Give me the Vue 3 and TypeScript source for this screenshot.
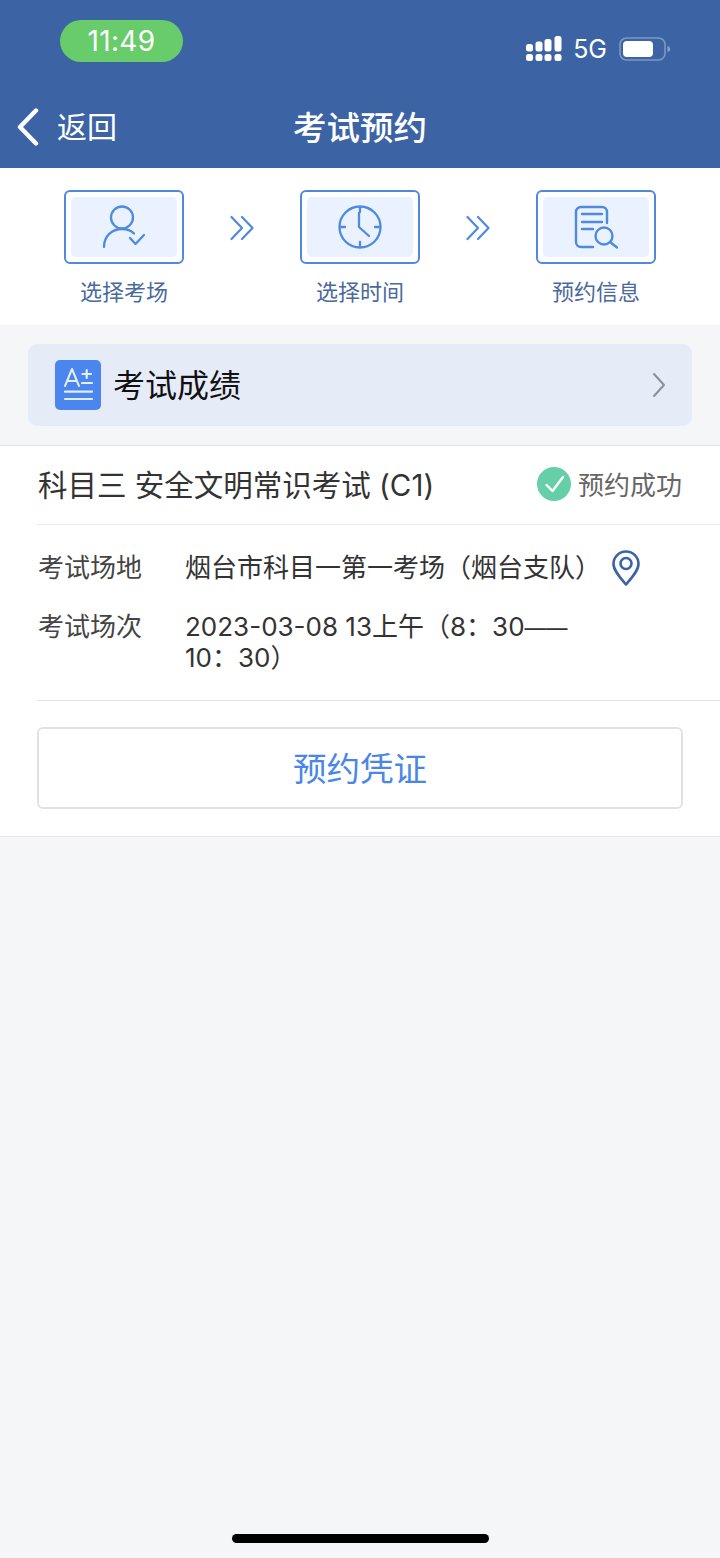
<script setup lang="ts">
interface Step {
  label: string
  icon: 'user' | 'clock' | 'doc'
}

const steps: Step[] = [
  { label: '选择考场', icon: 'user' },
  { label: '选择时间', icon: 'clock' },
  { label: '预约信息', icon: 'doc' }
]
</script>

<template>
  <div class="page">
    <header class="header">
      <div class="status">
        <div class="time">11:49</div>
        <div class="status-right">
          <svg class="signal" width="36" height="26" viewBox="0 0 36 26" fill="#fff">
            <rect x="0" y="8" width="7" height="7.500" rx="2.500" />
            <rect x="0" y="18" width="7" height="7" rx="2.500" />
            <rect x="9.500" y="5.500" width="7" height="10" rx="2.500" />
            <rect x="9.500" y="18" width="7" height="7" rx="2.500" />
            <rect x="18.500" y="3" width="7" height="12.500" rx="2.500" />
            <rect x="18.500" y="18" width="7" height="7" rx="2.500" />
            <rect x="28.500" y="0" width="7" height="15.500" rx="2.500" />
            <rect x="28.500" y="18" width="7" height="7" rx="2.500" />
          </svg>
          <span class="net">5G</span>
          <svg class="battery" width="52" height="26" viewBox="0 0 52 26">
            <rect x="1" y="2" width="45" height="22" rx="6.500" fill="none" stroke="#7d97c4" stroke-width="1.600" />
            <rect x="4" y="5" width="30" height="16" rx="4" fill="#fff" />
            <path d="M48.500 10c2 .6 2.600 2 2.600 3s-.6 2.400-2.600 3z" fill="#8ba3cc" />
          </svg>
        </div>
      </div>
      <div class="nav">
        <div class="back">
          <svg width="24" height="38" viewBox="0 0 24 38" fill="none">
            <path d="M20 2.500 4 19l16 16.500" stroke="#fff" stroke-width="4.400" stroke-linecap="round" stroke-linejoin="round" />
          </svg>
          <span>返回</span>
        </div>
        <div class="title">考试预约</div>
      </div>
    </header>

    <section class="steps">
      <template v-for="(step, i) in steps" :key="step.label">
        <div class="step">
          <div class="step-box">
            <div class="step-inner">
              <svg v-if="step.icon === 'user'" width="44" height="44" viewBox="0 0 44 44" fill="none" stroke="#4f8ae0" stroke-width="2.300" stroke-linecap="round" stroke-linejoin="round">
                <circle cx="20" cy="12.500" r="11" />
                <path d="M2 42C2 31 10 24 20 24c5 0 9 1.500 12 4.500" />
                <path d="m28 33 5.500 6L42 30" />
              </svg>
              <svg v-else-if="step.icon === 'clock'" width="44" height="44" viewBox="0 0 44 44" fill="none" stroke="#4f8ae0" stroke-width="2.300" stroke-linecap="round" stroke-linejoin="round">
                <circle cx="22" cy="22" r="20.500" />
                <path d="M22 2v5M22 37v5M2 22h5M37 22h5" />
                <path d="M21 8v14l10 9" />
              </svg>
              <svg v-else width="44" height="44" viewBox="0 0 44 44" fill="none" stroke="#4f8ae0" stroke-width="2.400" stroke-linecap="round" stroke-linejoin="round">
                <path d="M33 18V7a5 5 0 0 0-5-5H7a5 5 0 0 0-5 5v30a5 5 0 0 0 5 5h12" />
                <path d="M8 9h20M8 17h20M8 24h11" />
                <circle cx="30" cy="31" r="8.500" />
                <path d="m36 37 7 5.500" />
              </svg>
            </div>
          </div>
          <div class="step-label">{{ step.label }}</div>
        </div>
        <svg v-if="i < steps.length - 1" class="arrow" width="24" height="26" viewBox="0 0 24 26" fill="none" stroke="#4f8ae0" stroke-width="2.200" stroke-linecap="round" stroke-linejoin="round">
          <path d="m1.500 2 10.500 11L1.500 24" />
          <path d="m12 2 10.500 11L12 24" />
        </svg>
      </template>
    </section>

    <section class="score-wrap">
      <div class="score">
        <div class="score-icon">
          <svg width="34" height="36" viewBox="0 0 34 36" fill="none" stroke="#e4edfc" stroke-linecap="round">
            <path d="M4 19 11 2l7 17M6.500 14h9" stroke-width="2" stroke-linejoin="round" />
            <path d="M21.500 7h8.500M25.700 3v8M21 16h10" stroke-width="2.200" />
            <path d="M4 24.700h27M4 32h27" stroke-width="2.200" />
          </svg>
        </div>
        <div class="score-text">考试成绩</div>
        <svg class="chevron" width="14" height="26" viewBox="0 0 14 26" fill="none">
          <path d="m2 2 10 11L2 24" stroke="#8a8f97" stroke-width="2" stroke-linecap="round" stroke-linejoin="round" />
        </svg>
      </div>
    </section>

    <section class="card">
      <div class="card-head">
        <div class="subject">科目三 安全文明常识考试 (C1)</div>
        <div class="state">
          <svg class="state-icon" width="34" height="34" viewBox="0 0 34 34">
            <circle cx="17" cy="17" r="17" fill="#67cfa8" />
            <path d="M9.500 18l6 6L26 10" fill="none" stroke="#fff" stroke-width="2.400" stroke-linecap="round" stroke-linejoin="round" />
          </svg>
          <span>预约成功</span>
        </div>
      </div>
      <div class="details">
        <div class="row">
          <div class="key">考试场地</div>
          <div class="value place">
            <span>烟台市科目一第一考场（烟台支队）</span>
            <svg width="28" height="36" viewBox="0 0 28 36" fill="none" stroke="#3c64a4" stroke-width="2.600">
              <path d="M14 34.500C8 27.500 1.500 20.500 1.500 14a12.500 12.500 0 0 1 25 0c0 6.500-6.500 13.500-12.500 20.500z" stroke-linejoin="round" />
              <circle cx="14" cy="13.500" r="5.500" />
            </svg>
          </div>
        </div>
        <div class="row">
          <div class="key">考试场次</div>
          <div class="value when">2023-03-08 13上午（8：30<span class="dash">——</span><br />10：30）</div>
        </div>
      </div>
      <div class="action">
        <button class="voucher" type="button">预约凭证</button>
      </div>
    </section>

    <div class="home-bar"></div>
  </div>
</template>

<style>
html,
body {
  margin: 0;
  background: #f4f6f8;
}
</style>

<style scoped>
.page {
  position: relative;
  width: 720px;
  height: 1558px;
  overflow: hidden;
  background: #f4f6f8;
  font-family: Inter, "Noto Sans CJK SC", sans-serif;
  color: #333;
}

.header {
  height: 168px;
  background: #3c64a4;
  color: #fff;
}

.status {
  display: flex;
  justify-content: space-between;
  align-items: flex-start;
  height: 84px;
  padding: 20px 49px 0 60px;
  box-sizing: border-box;
}

.time {
  width: 123px;
  height: 42px;
  line-height: 42px;
  border-radius: 21px;
  background: #68cc6b;
  text-align: center;
  font-size: 28px;
  letter-spacing: 0.3px;
}

.status-right {
  display: flex;
  align-items: center;
  margin-top: 14px;
}

.signal {
  margin-right: 11px;
}

.net {
  font-size: 25px;
  margin-right: 12px;
}

.nav {
  position: relative;
  display: flex;
  align-items: center;
  justify-content: center;
  height: 84px;
}

.back {
  position: absolute;
  left: 16px;
  top: 24px;
  display: flex;
  align-items: center;
  gap: 17px;
  font-size: 30px;
  line-height: 38px;
}

.title {
  font-size: 33.500px;
  font-weight: 500;
  margin-top: -1px;
}

.steps {
  display: flex;
  justify-content: center;
  align-items: flex-start;
  gap: 46px;
  height: 157px;
  padding-top: 22px;
  box-sizing: border-box;
  background: #fff;
}

.step {
  width: 120px;
  display: flex;
  flex-direction: column;
  align-items: center;
}

.step-box {
  width: 120px;
  height: 74px;
  box-sizing: border-box;
  border: 2px solid #5089dc;
  border-radius: 6px;
  padding: 5px;
}

.step-inner {
  height: 100%;
  background: #e9f2fe;
  border-radius: 5px;
  display: flex;
  align-items: center;
  justify-content: center;
}

.step-label {
  margin-top: 13px;
  font-size: 22px;
  line-height: 30px;
  color: #4a6a9c;
  white-space: nowrap;
}

.arrow {
  margin-top: 25px;
}

.score-wrap {
  height: 121px;
  box-sizing: border-box;
  padding: 19px 28px 0;
  border-bottom: 1px solid #dfe1e5;
}

.score {
  height: 82px;
  display: flex;
  align-items: center;
  padding: 0 27px;
  background: #e6ecf7;
  border-radius: 9px;
}

.score-icon {
  width: 46px;
  height: 50px;
  background: #4a86ee;
  border-radius: 5px;
  display: flex;
  align-items: center;
  justify-content: center;
}

.score-text {
  flex: 1;
  margin-left: 12px;
  padding-bottom: 5px;
  font-size: 32px;
  color: #111;
}

.chevron {
  margin-right: -1px;
}

.card {
  background: #fff;
  border-bottom: 1px solid #e3e5e8;
  padding-left: 37px;
  height: 391px;
  box-sizing: border-box;
}

.card-head {
  height: 79px;
  box-sizing: border-box;
  display: flex;
  justify-content: space-between;
  align-items: center;
  padding: 0 38px 4px 1px;
  border-bottom: 1px solid #e8e9eb;
}

.subject {
  font-size: 29.500px;
  color: #333;
}

.state {
  display: flex;
  align-items: center;
  gap: 7px;
  font-size: 26px;
  color: #666;
}

.state-icon {
  margin-top: 2px;
}

.details {
  height: 176px;
  box-sizing: border-box;
  padding: 22px 0 0 1px;
  border-bottom: 1px solid #e3e5e8;
}

.row {
  display: flex;
  margin-bottom: 17px;
}

.key {
  width: 147px;
  flex: none;
  font-size: 26px;
  line-height: 42px;
  color: #444;
}

.value {
  font-size: 26px;
  line-height: 42px;
  color: #333;
}

.place {
  display: flex;
  align-items: center;
  gap: 11px;
}

.when {
  line-height: 30px;
  margin-top: 6px;
  white-space: nowrap;
}

.dash {
  font-size: 21.500px;
}

.action {
  padding: 26px 37px 0 0;
}

.voucher {
  display: block;
  width: 100%;
  height: 82px;
  background: #fff;
  border: 2px solid #e2e2e2;
  border-radius: 6px;
  color: #4a86e8;
  font-size: 33.500px;
  font-family: inherit;
  padding: 0 0 4px;
}

.home-bar {
  position: absolute;
  left: 232px;
  top: 1534px;
  width: 257px;
  height: 9px;
  border-radius: 5px;
  background: #000;
}
</style>
